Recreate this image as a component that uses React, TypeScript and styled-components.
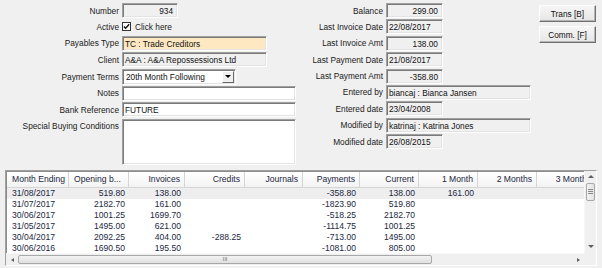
import React from "react";
import styled, { createGlobalStyle } from "styled-components";

const GlobalStyle = createGlobalStyle`
  html, body {
    margin: 0;
    padding: 0;
    background: #f0f0f0;
  }
  body {
    font-family: "Liberation Sans", Arial, sans-serif;
    font-size: 8.3px;
    color: #1a1a1a;
  }
`;

interface Column {
  title: string;
  width: number;
  align: "left" | "right";
}

const columns: Column[] = [
  { title: "Month Ending", width: 62, align: "left" },
  { title: "Opening b...", width: 60, align: "right" },
  { title: "Invoices", width: 56, align: "right" },
  { title: "Credits", width: 60, align: "right" },
  { title: "Journals", width: 58, align: "right" },
  { title: "Payments", width: 57, align: "right" },
  { title: "Current", width: 59, align: "right" },
  { title: "1 Month", width: 59, align: "right" },
  { title: "2 Months", width: 59, align: "right" },
  { title: "3 Months", width: 59, align: "right" },
];

const rows: string[][] = [
  ["31/08/2017", "519.80", "138.00", "", "", "-358.80", "138.00", "161.00", "", ""],
  ["31/07/2017", "2182.70", "161.00", "", "", "-1823.90", "519.80", "", "", ""],
  ["30/06/2017", "1001.25", "1699.70", "", "", "-518.25", "2182.70", "", "", ""],
  ["31/05/2017", "1495.00", "621.00", "", "", "-1114.75", "1001.25", "", "", ""],
  ["30/04/2017", "2092.25", "404.00", "-288.25", "", "-713.00", "1495.00", "", "", ""],
  ["30/06/2016", "1690.50", "195.50", "", "", "-1081.00", "805.00", "", "", ""],
];

export default function App() {
  return (
    <>
      <GlobalStyle />
      <Window>
        <Top>
          <Form $labelWidth={119} $width={300}>
            <Label>Number</Label>
            <Field $w={56} $align="right">934</Field>

            <Label>Active</Label>
            <CheckRow>
              <CheckBox>
                <svg width="7" height="7" viewBox="0 0 7 7">
                  <path d="M0.8 3.4 L2.6 5.3 L6.2 1.2" fill="none" stroke="#111" strokeWidth="1.4" />
                </svg>
              </CheckBox>
              <span>Click here</span>
            </CheckRow>

            <Label>Payables Type</Label>
            <Field $w={145} $bg="#fde8c2">TC : Trade Creditors</Field>

            <Label>Client</Label>
            <Field $w={145}>A&amp;A : A&amp;A Repossessions Ltd</Field>

            <Label>Payment Terms</Label>
            <Select>
              <span>20th Month Following</span>
              <DropButton>
                <DownArrow $color="#000" />
              </DropButton>
            </Select>

            <Label>Notes</Label>
            <Field $w={174} $bg="#fff" />

            <Label>Bank Reference</Label>
            <Field $w={174} $bg="#fff">FUTURE</Field>

            <Label $top>Special Buying Conditions</Label>
            <Field $w={174} $h={46} $bg="#fff" />
          </Form>

          <Form $labelWidth={83} $width={232}>
            <Label>Balance</Label>
            <Field $w={57} $align="right">299.00</Field>
            <Label>Last Invoice Date</Label>
            <Field $w={57}>22/08/2017</Field>
            <Label>Last Invoice Amt</Label>
            <Field $w={57} $align="right">138.00</Field>
            <Label>Last Payment Date</Label>
            <Field $w={57}>21/08/2017</Field>
            <Label>Last Payment Amt</Label>
            <Field $w={57} $align="right">-358.80</Field>
            <Label>Entered by</Label>
            <Field $w={145}>biancaj : Bianca Jansen</Field>
            <Label>Entered date</Label>
            <Field $w={57}>23/04/2008</Field>
            <Label>Modified by</Label>
            <Field $w={145}>katrinaj : Katrina Jones</Field>
            <Label>Modified date</Label>
            <Field $w={57}>26/08/2015</Field>
          </Form>

          <Buttons>
            <Button>Trans [B]</Button>
            <Button>Comm. [F]</Button>
          </Buttons>
        </Top>

        <ListView>
          <ListArea>
            <HeaderRow>
              {columns.map((c) => (
                <HeaderCell key={c.title} $w={c.width} $align={c.align === "right" && c.title !== "Opening b..." ? "right" : "left"}>
                  {c.title}
                </HeaderCell>
              ))}
            </HeaderRow>
            {rows.map((r, i) => (
              <Row key={i} $selected={i === 0}>
                {r.map((v, j) => (
                  <Cell key={j} $w={columns[j].width} $align={columns[j].align}>
                    {v}
                  </Cell>
                ))}
              </Row>
            ))}
          </ListArea>

          <VScroll>
            <ArrowBox>
              <UpArrow $color="#606060" />
            </ArrowBox>
            <VThumb>
              <Grip />
            </VThumb>
            <Track />
            <ArrowBox>
              <DownArrow $color="#606060" />
            </ArrowBox>
          </VScroll>

          <HScroll>
            <ArrowBox>
              <LeftArrow />
            </ArrowBox>
            <HThumb>III</HThumb>
            <Track />
            <ArrowBox>
              <RightArrow />
            </ArrowBox>
          </HScroll>
          <Corner />
        </ListView>
      </Window>
    </>
  );
}

const Window = styled.div`
  width: 602px;
  height: 268px;
  background: #f0f0f0;
  display: flex;
  flex-direction: column;
  overflow: hidden;
`;

const Top = styled.div`
  display: flex;
  align-items: flex-start;
  padding-top: 3px;
`;

const Form = styled.div<{ $labelWidth: number; $width: number }>`
  width: ${(p) => p.$width}px;
  display: grid;
  grid-template-columns: ${(p) => p.$labelWidth}px 1fr;
  grid-auto-rows: minmax(15px, auto);
  column-gap: 3px;
  row-gap: 1.4px;
`;

const Label = styled.div<{ $top?: boolean }>`
  text-align: right;
  align-self: ${(p) => (p.$top ? "start" : "center")};
  padding-top: ${(p) => (p.$top ? "2px" : "0")};
  white-space: nowrap;
  line-height: 10px;
`;

const Field = styled.div<{ $w: number; $h?: number; $bg?: string; $align?: "left" | "right" }>`
  box-sizing: border-box;
  width: ${(p) => p.$w}px;
  height: ${(p) => p.$h ?? 15}px;
  background: ${(p) => p.$bg ?? "#f0f0f0"};
  border: 1px solid;
  border-color: #a0a0a0 #ffffff #ffffff #a0a0a0;
  box-shadow: inset 1px 1px 0 #7a7a7a, inset -1px -1px 0 #e3e3e3;
  padding: 2px ${(p) => (p.$align === "right" ? "4px" : "2px")} 0 2px;
  text-align: ${(p) => p.$align ?? "left"};
  line-height: 10px;
  white-space: nowrap;
  overflow: hidden;
  color: #111;
`;

const CheckRow = styled.div`
  display: flex;
  align-items: center;
  gap: 4px;
  line-height: 10px;
`;

const CheckBox = styled.span`
  box-sizing: border-box;
  width: 9px;
  height: 9px;
  background: #fff;
  border: 1px solid #333;
  display: flex;
  align-items: center;
  justify-content: center;
`;

const Select = styled.div`
  box-sizing: border-box;
  width: 114px;
  height: 16px;
  background: #fff;
  border: 1px solid;
  border-color: #a0a0a0 #ffffff #ffffff #a0a0a0;
  box-shadow: inset 1px 1px 0 #7a7a7a, inset -1px -1px 0 #e3e3e3;
  display: flex;
  align-items: center;
  justify-content: space-between;
  padding: 1px 1px 1px 3px;
  line-height: 10px;
  color: #111;
`;

const DropButton = styled.div`
  box-sizing: border-box;
  width: 12px;
  height: 12px;
  background: #f0f0f0;
  border: 1px solid;
  border-color: #fff #696969 #696969 #fff;
  display: flex;
  align-items: center;
  justify-content: center;
`;

const DownArrow = styled.span<{ $color: string }>`
  width: 0;
  height: 0;
  border-left: 3px solid transparent;
  border-right: 3px solid transparent;
  border-top: 3px solid ${(p) => p.$color};
`;

const UpArrow = styled.span<{ $color: string }>`
  width: 0;
  height: 0;
  border-left: 3px solid transparent;
  border-right: 3px solid transparent;
  border-bottom: 3px solid ${(p) => p.$color};
`;

const LeftArrow = styled.span`
  width: 0;
  height: 0;
  border-top: 2.5px solid transparent;
  border-bottom: 2.5px solid transparent;
  border-right: 3px solid #606060;
`;

const RightArrow = styled.span`
  width: 0;
  height: 0;
  border-top: 2.5px solid transparent;
  border-bottom: 2.5px solid transparent;
  border-left: 3px solid #606060;
`;

const Buttons = styled.div`
  display: flex;
  flex-direction: column;
  gap: 4px;
  margin-left: 7px;
  padding-top: 2px;
`;

const Button = styled.div`
  box-sizing: border-box;
  width: 57px;
  height: 17px;
  background: linear-gradient(#f6f6f6, #e6e6e6);
  border: 1px solid;
  border-color: #fdfdfd #707070 #707070 #fdfdfd;
  box-shadow: inset -1px -1px 0 #b5b5b5;
  display: flex;
  align-items: center;
  justify-content: center;
  color: #111;
`;

const ListView = styled.div`
  box-sizing: border-box;
  margin: 5px 5px 0 5px;
  height: 96px;
  background: #fff;
  border: 1px solid;
  border-color: #a0a0a0 #ffffff #ffffff #a0a0a0;
  box-shadow: inset 1px 1px 0 #8c8c8c;
  display: grid;
  grid-template-columns: 1fr 12px;
  grid-template-rows: 1fr 12px;
  overflow: hidden;
`;

const ListArea = styled.div`
  overflow: hidden;
  padding: 1px 0 0 1px;
  color: #1c2742;
  font-size: 8.6px;
`;

const HeaderRow = styled.div`
  display: flex;
  height: 16px;
  width: max-content;
  background: linear-gradient(#ffffff, #f3f3f3);
  border-bottom: 1px solid #d5d5d5;
  box-sizing: border-box;
`;

const HeaderCell = styled.div<{ $w: number; $align: "left" | "right" }>`
  box-sizing: border-box;
  flex: 0 0 ${(p) => p.$w}px;
  width: ${(p) => p.$w}px;
  border-right: 1px solid #d5d5d5;
  padding: 0 4px 0 5px;
  text-align: ${(p) => p.$align};
  line-height: 15px;
  white-space: nowrap;
  overflow: hidden;
`;

const Row = styled.div<{ $selected: boolean }>`
  display: flex;
  width: max-content;
  height: 11.1px;
  background: ${(p) => (p.$selected ? "#eeeeee" : "#fff")};
`;

const Cell = styled.div<{ $w: number; $align: "left" | "right" }>`
  box-sizing: border-box;
  flex: 0 0 ${(p) => p.$w}px;
  width: ${(p) => p.$w}px;
  padding: 0 4px 0 5px;
  text-align: ${(p) => p.$align};
  line-height: 11.1px;
  white-space: nowrap;
  overflow: hidden;
`;

const VScroll = styled.div`
  display: flex;
  flex-direction: column;
  background: #f0f0f0;
  border-left: 1px solid #f7f7f7;
`;

const HScroll = styled.div`
  display: flex;
  background: #f0f0f0;
  border-top: 1px solid #f7f7f7;
`;

const ArrowBox = styled.div`
  flex: 0 0 12px;
  width: 12px;
  height: 12px;
  display: flex;
  align-items: center;
  justify-content: center;
`;

const Track = styled.div`
  flex: 1;
`;

const VThumb = styled.div`
  box-sizing: border-box;
  height: 18px;
  margin: 0 1px;
  background: linear-gradient(90deg, #f3f3f3, #e2e2e2);
  border: 1px solid #a8a8a8;
  border-radius: 2px;
  display: flex;
  align-items: center;
  justify-content: center;
`;

const Grip = styled.span`
  width: 5px;
  height: 5px;
  background: repeating-linear-gradient(#8a8a8a 0 1px, transparent 1px 2px);
`;

const HThumb = styled.div`
  box-sizing: border-box;
  flex: 0 0 414px;
  margin: 1px 0;
  background: linear-gradient(#f3f3f3, #e0e0e0);
  border: 1px solid #a8a8a8;
  border-radius: 2px;
  display: flex;
  align-items: center;
  justify-content: center;
  font-size: 6px;
  line-height: 6px;
  color: #777;
`;

const Corner = styled.div`
  background: #f0f0f0;
`;
